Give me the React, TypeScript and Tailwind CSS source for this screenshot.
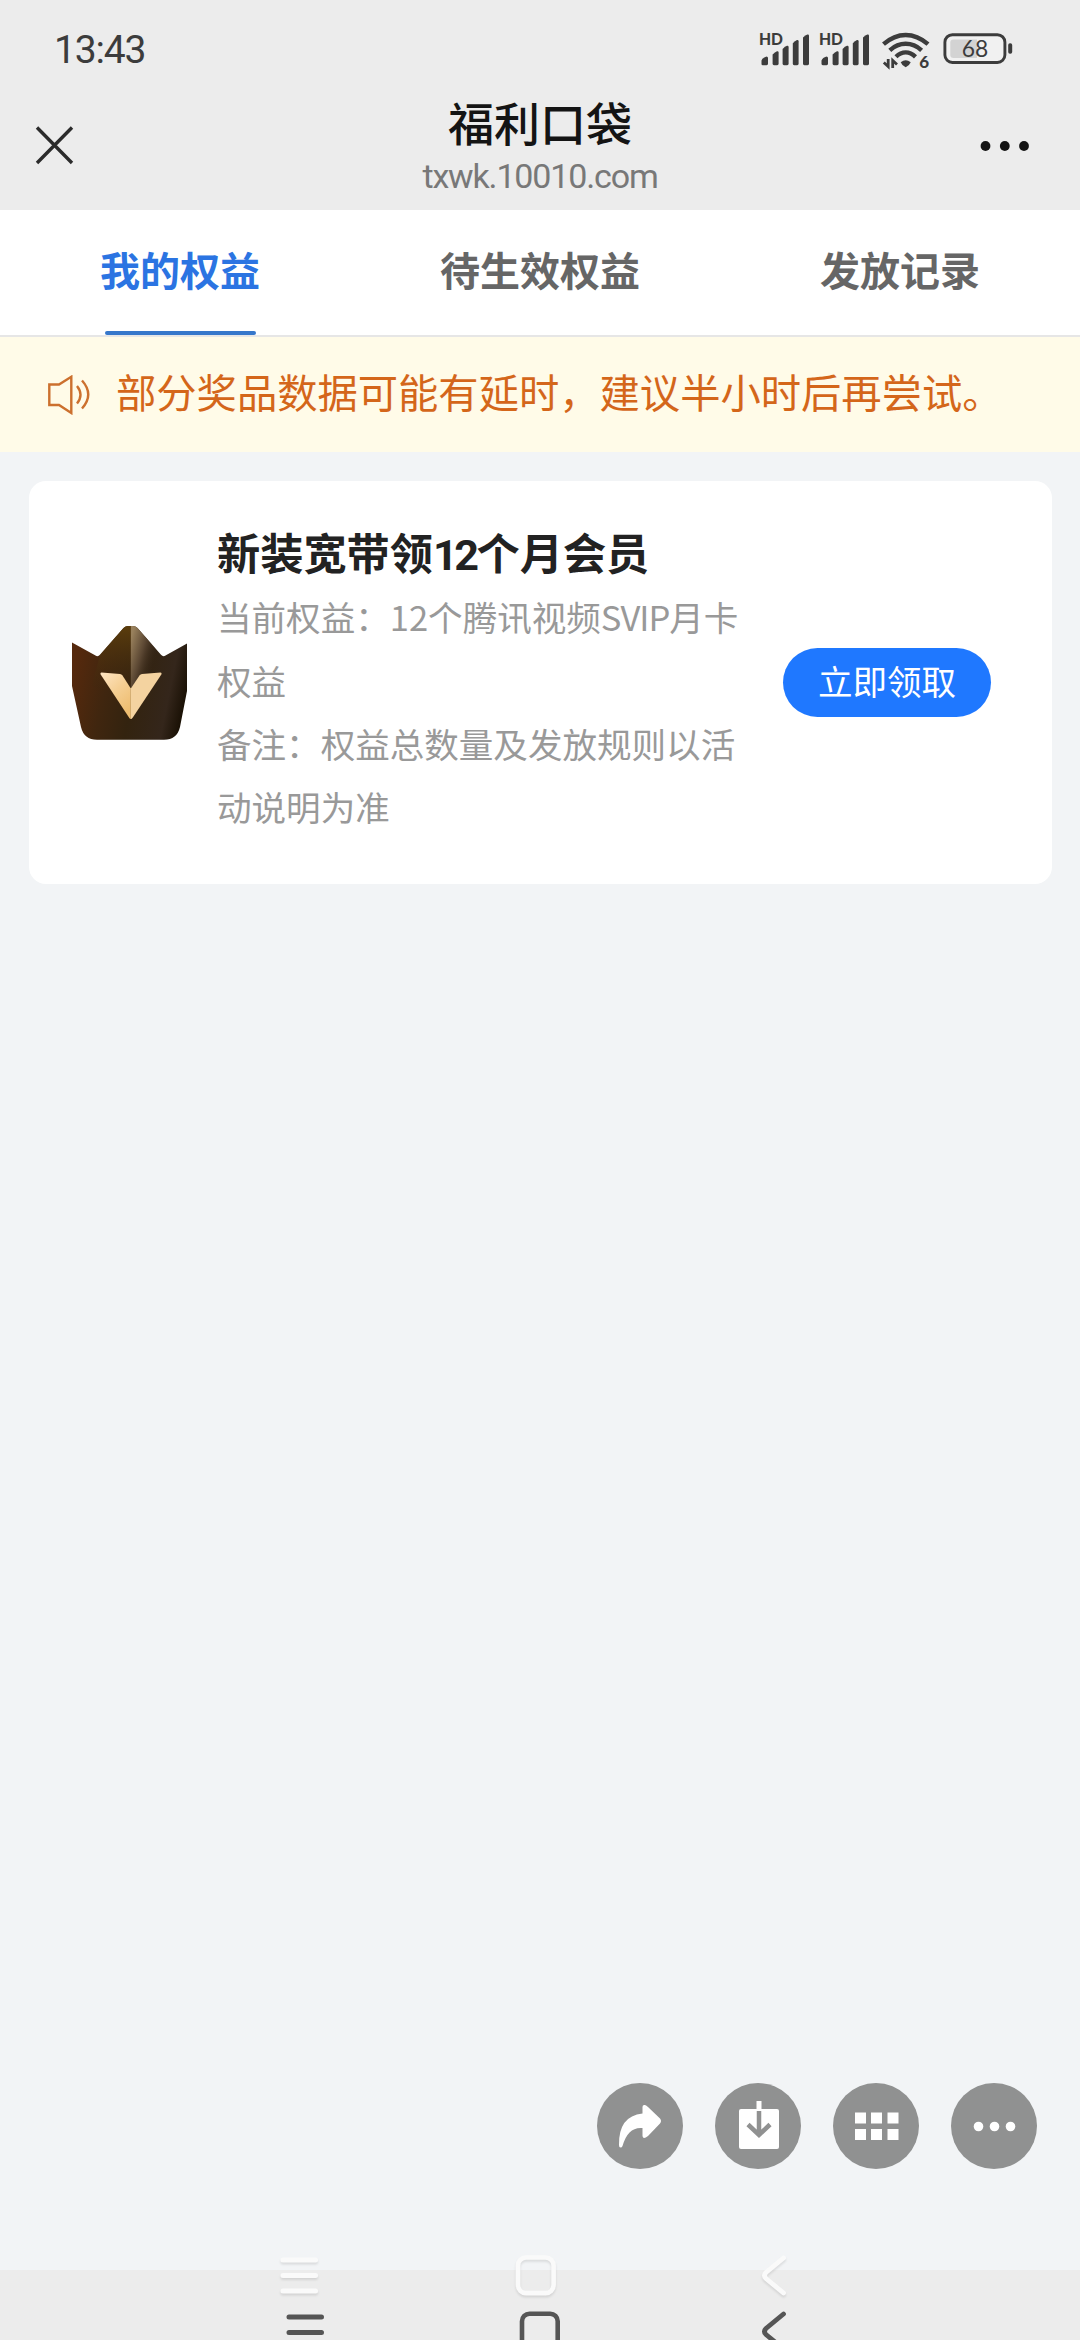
import { useState } from 'react';
import type { ReactNode } from 'react';

const tabs = ['我的权益', '待生效权益', '发放记录'];

const SignalIcon = () => (
  <svg width="50" height="34" viewBox="0 0 50 34" fill="#3c3c3c" className="shrink-0 overflow-visible">
    <text x="-1" y="13" fontSize="16.5" fontWeight="900" fontFamily="Lato, sans-serif" textLength="24" lengthAdjust="spacingAndGlyphs">HD</text>
    <path d="M1.5 28.5Q2.5 25.5 6.5 24.5Q8 24.5 8 26V31.8Q8 33.2 6.6 33.2H2.8Q1.4 33.2 1.5 31.8Z" />
    <path d="M12.6 22.6Q15 20 17 19.3Q18.6 19 18.6 20.5V31.8Q18.6 33.2 17.2 33.2H14Q12.6 33.2 12.6 31.8Z" />
    <path d="M22.6 17Q25 14.4 27 13.8Q28.6 13.4 28.6 15V31.8Q28.6 33.2 27.2 33.2H24Q22.6 33.2 22.6 31.8Z" />
    <path d="M32.8 11.2Q35 8.8 37 8.1Q38.6 7.8 38.6 9.3V31.8Q38.6 33.2 37.2 33.2H34.2Q32.8 33.2 32.8 31.8Z" />
    <path d="M43 5.6Q45.4 3.2 47.4 2.5Q49 2.2 49 3.7V31.8Q49 33.2 47.6 33.2H44.4Q43 33.2 43 31.8Z" />
  </svg>
);

const WifiIcon = () => (
  <svg width="48" height="38" viewBox="0 0 48 38" className="shrink-0 overflow-visible">
    <g fill="none" stroke="#3c3c3c" strokeWidth="4.4">
      <path d="M1.5 12.2Q12 3 23.7 3T46 12.2" />
      <path d="M7.8 18.3Q15 11.8 23.7 11.8T39.6 18.3" />
      <path d="M14 24.8Q18.5 20.4 23.7 20.4T33.5 24.8" />
    </g>
    <path d="M18.7 30.2Q23.7 26.4 28.7 30.2Q27.2 34 23.7 35.2Q20.2 34 18.7 30.2Z" fill="#3c3c3c" />
    <path d="M1.8 30.5L6.2 34.5V27M10.7 36V28.5L15 32.5" fill="none" stroke="#3c3c3c" strokeWidth="2.8" />
    <text x="37.2" y="35.8" fontSize="17" fontWeight="900" fill="#3c3c3c" fontFamily="Lato, sans-serif">6</text>
  </svg>
);

const BatteryIcon = () => (
  <svg width="70" height="32" viewBox="0 0 70 32" className="shrink-0 overflow-visible">
    <rect x="1.9" y="2.7" width="60" height="27.8" rx="7.5" fill="#f1f1f1" stroke="#3c3c3c" strokeWidth="2.9" />
    <path d="M10.5 7.5H34V25.9H10.5Q7.3 25.9 7.3 22.7V10.7Q7.3 7.5 10.5 7.5Z" fill="#d3d3d3" />
    <rect x="65.2" y="11.3" width="4" height="10.4" rx="1.8" fill="#3c3c3c" />
    <text x="18.8" y="25.2" fontSize="23" fill="#3c3c3c" fontFamily="Lato, sans-serif" textLength="26.5" lengthAdjust="spacingAndGlyphs">68</text>
  </svg>
);

const CrownIcon = () => (
  <svg width="115" height="114" viewBox="0 0 115 114" className="shrink-0">
    <defs>
      <linearGradient id="crown" x1="0" y1="0.4" x2="1" y2="0.6">
        <stop offset="0" stopColor="#56290d" />
        <stop offset="0.3" stopColor="#40260f" />
        <stop offset="0.55" stopColor="#33230f" />
        <stop offset="0.85" stopColor="#34261b" />
        <stop offset="1" stopColor="#191004" />
      </linearGradient>
      <linearGradient id="leaf" x1="0" y1="0" x2="0" y2="1">
        <stop offset="0" stopColor="#5b3d0c" />
        <stop offset="1" stopColor="#3b2510" stopOpacity="0" />
      </linearGradient>
      <linearGradient id="shine" x1="0" y1="0.2" x2="0.75" y2="0.65">
        <stop offset="0" stopColor="#98805c" />
        <stop offset="0.5" stopColor="#5a4632" />
        <stop offset="1" stopColor="#33251a" stopOpacity="0" />
      </linearGradient>
      <linearGradient id="gold" x1="0" y1="0" x2="0.6" y2="1">
        <stop offset="0" stopColor="#ffe6c4" />
        <stop offset="0.5" stopColor="#f5cf94" />
        <stop offset="1" stopColor="#eebd70" />
      </linearGradient>
    </defs>
    <path d="M0 16.5L23.5 29.6Q26 31 28 28.8L51.5 2Q53.5 0 56 0H61Q63.5 0 65.5 2L89 28.8Q91 31 93.5 29.6L115 17.5V65L108 101Q105 113.8 92 113.8H25Q12 113.8 9 101L0 60Z" fill="url(#crown)" />
    <path d="M28 28.8L51.5 2Q53.5 0 56 0H58.8V72L20 60Z" fill="url(#leaf)" />
    <path d="M58.8 0H61Q63.5 0 65.5 2L89 28.8L88 42L58.8 62Z" fill="url(#shine)" />
    <path d="M29.5 46.5L48 48Q49.5 48.2 50.5 49.5L58.8 62.5V93Q58 93 57 91.5L28.5 48.2Q28 46.5 29.5 46.5Z" fill="url(#gold)" />
    <path d="M88.5 46.5L70 48Q68.5 48.2 67.5 49.5L58.8 62.5V93Q59.8 93 60.8 91.5L89.5 48.2Q90 46.5 88.5 46.5Z" fill="#f4d3a0" />
  </svg>
);

const RoundButton = ({ label, children }: { label: string; children: ReactNode }) => (
  <button aria-label={label} className="w-[86px] h-[86px] rounded-full bg-[#909191]">
    <svg width="86" height="86" viewBox="0 0 86 86" fill="white">
      {children}
    </svg>
  </button>
);

const MenuLines = ({ color }: { color: string }) => (
  <path d="M3 3H35.5M3 18.5H35.5M3 34H35.5" fill="none" stroke={color} strokeWidth="5" strokeLinecap="round" />
);

const BackArrow = ({ color }: { color: string }) => (
  <path d="M23.5 4L6 18.5Q3 21.5 6 24.5L23.5 39" fill="none" stroke={color} strokeWidth="4.8" strokeLinecap="round" />
);

const App = () => {
  const [active, setActive] = useState(0);

  return (
    <div className="w-[1080px] h-[2340px] flex flex-col overflow-hidden bg-[#f2f4f6] font-['Noto_Sans_CJK_SC',sans-serif]">
      {/* Header */}
      <header className="h-[210px] bg-[#ececec] shrink-0">
        <div className="h-[98px] flex items-start justify-between pl-[54px] pr-[67px]">
          <div className="mt-[27px] text-[39px] leading-[46px] tracking-[-1.2px] text-[#3c3c3c] font-['Roboto',sans-serif]">
            13:43
          </div>
          <div className="flex items-start mt-[32px]">
            <SignalIcon />
            <div className="w-[10px]" />
            <SignalIcon />
            <div className="w-[12px]" />
            <WifiIcon />
            <div className="w-[13px]" />
            <BatteryIcon />
          </div>
        </div>
        <div className="h-[112px] flex justify-between pl-[35px] pr-[50px]">
          <button aria-label="关闭" className="w-[150px] h-[96px] flex items-center">
            <svg width="40" height="40" viewBox="0 0 40 40">
              <path d="M2 1.5L37 37M37 1.5L2 37" stroke="#2b2b2b" strokeWidth="3.4" fill="none" />
            </svg>
          </button>
          <div className="flex flex-col items-center pl-[15px]">
            <h1 className="-mt-[2px] text-[46px] leading-[50px] font-medium text-[#141414]">福利口袋</h1>
            <p className="mt-[7px] text-[34px] leading-[46px] tracking-[-1.15px] text-[#787878] whitespace-nowrap font-['Roboto',sans-serif]">
              txwk.10010.com
            </p>
          </div>
          <button aria-label="更多" className="w-[150px] h-[96px] flex items-center justify-end">
            <svg width="50" height="12" viewBox="0 0 50 12" fill="#141414">
              <circle cx="5.5" cy="6" r="4.9" />
              <circle cx="24.8" cy="6" r="4.9" />
              <circle cx="44" cy="6" r="4.9" />
            </svg>
          </button>
        </div>
      </header>

      {/* Tabs */}
      <nav className="h-[127px] shrink-0 grid grid-cols-3 bg-white border-b-2 border-[#e6e6e6]">
        {tabs.map((tab, index) => (
          <button
            key={tab}
            onClick={() => setActive(index)}
            className={`flex flex-col items-center justify-between text-[40px] font-bold ${
              active === index ? 'text-[#2b74e2]' : 'text-[#666666]'
            }`}
          >
            <span className="mt-[29px] leading-[60px]">{tab}</span>
            <span className={`w-[151px] h-[4px] rounded-full ${active === index ? 'bg-[#3677cb]' : ''}`} />
          </button>
        ))}
      </nav>

      {/* Notice */}
      <div className="h-[115px] shrink-0 flex items-center bg-[#fffbe8] pl-[47px] text-[#d4661a]">
        <svg width="44" height="40" viewBox="0 0 44 40" fill="none" stroke="#cc702e" strokeWidth="2.4" className="shrink-0">
          <path d="M2.3 9.5H12L24.3 1.8V38L12 30H2.3Z" />
          <path d="M30 11Q37 19.8 30 28.6M35 5.5Q47.5 19.5 35 33.5" />
        </svg>
        <p className="ml-[25px] pb-[8px] text-[40.3px] leading-[60px] whitespace-nowrap">
          部分奖品数据可能有延时，建议半小时后再尝试。
        </p>
      </div>

      {/* Benefit card */}
      <main className="flex-1 px-[28.5px] pt-[29px] flex flex-col">
        <section className="h-[403px] flex items-center rounded-[17px] bg-white pl-[43.5px]">
          <CrownIcon />
          <div className="ml-[30px] w-[530px] pb-[5px]">
            <h2 className="-mb-[1px] text-[43.2px] leading-[60px] font-bold text-[#222222]">
              新装宽带领<span className="tracking-[-3.5px] mr-[1px] font-['Roboto',sans-serif]">12</span>个月会员
            </h2>
            <p className="text-[34.56px] leading-[63.36px] text-[#999999]">
              当前权益：12个腾讯视频<span className="tracking-[-1px]">SVIP</span>月卡权益
            </p>
            <p className="text-[34.56px] leading-[63.36px] text-[#999999]">备注：权益总数量及发放规则以活动说明为准</p>
          </div>
          <button className="ml-[36px] w-[208px] h-[69px] rounded-full bg-[#1f78ff] text-white text-[34.56px] leading-[64px] pb-[5px]">
            立即领取
          </button>
        </section>

        <div className="mt-auto mb-[101px] mr-[14.5px] flex justify-end gap-8">
          <RoundButton label="分享">
            <path d="M45.5 24Q45.5 21.5 48 22Q49.5 22.3 51 24L63 35.5Q65 38 63 40.5L51 53Q46 57 45.5 53V45Q31 43.5 25.5 63Q25 64.5 23.5 64.5T22 62Q21.5 33 45.5 30.5Z" />
          </RoundButton>
          <RoundButton label="下载">
            <rect x="24" y="26" width="40" height="40" rx="2" />
            <rect x="41.5" y="18" width="5" height="10" />
            <path d="M44 28V52M33 41.5L44 52L55 41.5" fill="none" stroke="#909191" strokeWidth="4.5" />
          </RoundButton>
          <RoundButton label="菜单">
            {[22, 38, 54.5].map((x) => (
              <g key={x}>
                <rect x={x} y="29.5" width="11" height="11" />
                <rect x={x} y="46" width="11" height="11" />
              </g>
            ))}
          </RoundButton>
          <RoundButton label="更多操作">
            <circle cx="27.5" cy="43.5" r="4.8" />
            <circle cx="43.5" cy="43.5" r="4.8" />
            <circle cx="59.5" cy="43.5" r="4.8" />
          </RoundButton>
        </div>
      </main>

      {/* System navigation */}
      <footer className="relative h-[70px] shrink-0 bg-[#ececec]">
        <div className="flex pt-[40px] pl-[286px]">
          <svg width="40" height="44" viewBox="0 0 40 44" className="shrink-0 mt-[3.5px]">
            <MenuLines color="#555555" />
          </svg>
          <svg width="44" height="44" viewBox="0 0 44 44" className="shrink-0 ml-[191.5px]">
            <rect x="4" y="3.7" width="35.7" height="45" rx="7.5" fill="none" stroke="#555555" strokeWidth="4.6" />
          </svg>
          <svg width="30" height="44" viewBox="0 0 30 44" className="shrink-0 ml-[198.5px]">
            <BackArrow color="#555555" />
          </svg>
        </div>
        <div className="absolute left-[280px] -top-[16px] flex drop-shadow-[0_2px_1px_rgba(0,0,0,0.1)]">
          <svg width="40" height="44" viewBox="0 0 40 44" className="shrink-0 mt-[3px]">
            <MenuLines color="#fafafa" />
          </svg>
          <svg width="44" height="44" viewBox="0 0 44 44" className="shrink-0 ml-[194px]">
            <rect x="4" y="3.5" width="35.6" height="35.6" rx="8" fill="none" stroke="#fafafa" strokeWidth="4.6" />
          </svg>
          <svg width="30" height="44" viewBox="0 0 30 44" className="shrink-0 ml-[202px]">
            <BackArrow color="#fafafa" />
          </svg>
        </div>
      </footer>
    </div>
  );
};

export default App;
